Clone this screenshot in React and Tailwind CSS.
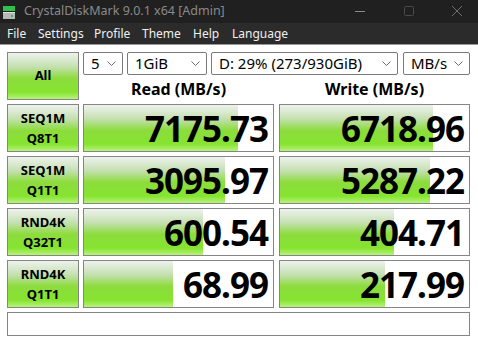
import React from 'react';

const FONT = { fontFamily: '"Noto Sans", "Open Sans", sans-serif' };

const GREEN =
  'bg-[linear-gradient(to_bottom,#eef2ee_0%,#c4e0b0_30%,#8cdc3c_55%,#86e430_85%,#b8f27c_100%)]';

const rows = [
  { l1: 'SEQ1M', l2: 'Q8T1', read: '7175.73', write: '6718.96', rw: 154, ww: 153 },
  { l1: 'SEQ1M', l2: 'Q1T1', read: '3095.97', write: '5287.22', rw: 141, ww: 150 },
  { l1: 'RND4K', l2: 'Q32T1', read: '600.54', write: '404.71', rw: 119, ww: 114 },
  { l1: 'RND4K', l2: 'Q1T1', read: '68.99', write: '217.99', rw: 89, ww: 105 },
];

const menu = [
  ['File', 'w-[31px]'],
  ['Settings', 'w-[56px]'],
  ['Profile', 'w-[48px]'],
  ['Theme', 'w-[51px]'],
  ['Help', 'w-[39px]'],
  ['Language', 'w-[60px]'],
];

function Chevron() {
  return (
    <svg width="9" height="5" viewBox="0 0 9 5" className="shrink-0">
      <path d="M0.5 0.5 L4.5 4.5 L8.5 0.5" fill="none" stroke="#6b6b6b" strokeWidth="1" />
    </svg>
  );
}

function Combo({ text, width }) {
  return (
    <div className={`${width} h-[23px] flex items-center justify-between pl-[7px] pr-[6px] bg-white border border-[#7a7a7a] rounded-[2px]`}>
      <span className="text-[15px] leading-none text-black whitespace-nowrap">{text}</span>
      <Chevron />
    </div>
  );
}

function ValueBox({ value, fill }) {
  return (
    <div className="relative w-[191px] h-[48px] border border-[#858585] bg-white overflow-hidden">
      <div className={`absolute left-0 top-0 bottom-0 ${GREEN}`} style={{ width: fill }} />
      <div className="relative h-full flex items-center justify-end pr-[5px]">
        <span className="text-[35px] font-bold leading-none tracking-[-1px] text-black">{value}</span>
      </div>
    </div>
  );
}

export default function App() {
  return (
    <div className="w-[478px] h-[341px] bg-white overflow-hidden flex flex-col" style={FONT}>
      {/* title bar */}
      <div className="h-[23px] bg-[#202020] flex items-center">
        <svg width="14" height="16" viewBox="0 0 14 16" className="ml-[2px] mr-[8px]">
          <rect x="1" y="2" width="12" height="5" fill="#2fbf4a" />
          <rect x="1" y="8" width="12" height="7" fill="#b8b8b8" />
          <rect x="1" y="8" width="12" height="1" fill="#e0e0e0" />
          <rect x="9" y="11" width="2" height="2" fill="#2fbf4a" />
        </svg>
        <span className="text-[12.5px] text-[#8a8a8a] whitespace-nowrap">CrystalDiskMark 9.0.1 x64 [Admin]</span>
        <div className="ml-auto flex items-center">
          <svg width="46" height="23" viewBox="0 0 46 23">
            <path d="M15 11.5 H25" stroke="#8a8a8a" strokeWidth="1" />
          </svg>
          <svg width="46" height="23" viewBox="0 0 46 23">
            <rect x="18.5" y="6.5" width="9" height="9" rx="1" fill="none" stroke="#4a4a4a" strokeWidth="1" />
          </svg>
          <svg width="46" height="23" viewBox="0 0 46 23">
            <path d="M20 6 L30 16 M30 6 L20 16" stroke="#6e6e6e" strokeWidth="1" />
          </svg>
        </div>
      </div>

      {/* menu bar */}
      <div className="h-[21px] bg-[#2b2b2b] flex items-center pl-[7px]">
        {menu.map(([m, w]) => (
          <span key={m} className={`${w} text-[12px] leading-none text-[#f0f0f0]`}>{m}</span>
        ))}
      </div>
      <div className="h-px bg-[#9a9a9a]" />

      {/* content */}
      <div className="flex flex-col pl-[7px] pt-[7px] gap-[4px]">
        <div className="flex h-[48px]">
          <div className={`w-[72px] h-[48px] border border-[#858585] ${GREEN} flex items-center justify-center`}>
            <span className="text-[13px] font-bold text-black">All</span>
          </div>
          <div className="flex flex-col ml-[4px]">
            <div className="flex">
              <Combo text="5" width="w-[40px]" />
              <div className="ml-[4px]"><Combo text="1GiB" width="w-[80px]" /></div>
              <div className="ml-[4px]"><Combo text="D: 29% (273/930GiB)" width="w-[187px]" /></div>
              <div className="ml-[5px]"><Combo text="MB/s" width="w-[67px]" /></div>
            </div>
            <div className="flex flex-1 items-end pb-[1px]">
              <div className="w-[191px] text-center text-[16px] font-bold leading-[20px] text-black">Read (MB/s)</div>
              <div className="w-[191px] ml-[5px] text-center text-[16px] font-bold leading-[20px] text-black">Write (MB/s)</div>
            </div>
          </div>
        </div>

        {rows.map((r, i) => (
          <div key={i} className="flex h-[48px]">
            <div className={`w-[72px] h-[48px] border border-[#858585] ${GREEN} flex flex-col items-center justify-center`}>
              <span className="text-[13px] font-bold leading-[20px] text-black">{r.l1}</span>
              <span className="text-[13px] font-bold leading-[20px] text-black">{r.l2}</span>
            </div>
            <div className="ml-[4px]"><ValueBox value={r.read} fill={r.rw} /></div>
            <div className="ml-[5px]"><ValueBox value={r.write} fill={r.ww} /></div>
          </div>
        ))}

        <div className="w-[463px] h-[24px] border border-[#858585] bg-white" />
      </div>
    </div>
  );
}
